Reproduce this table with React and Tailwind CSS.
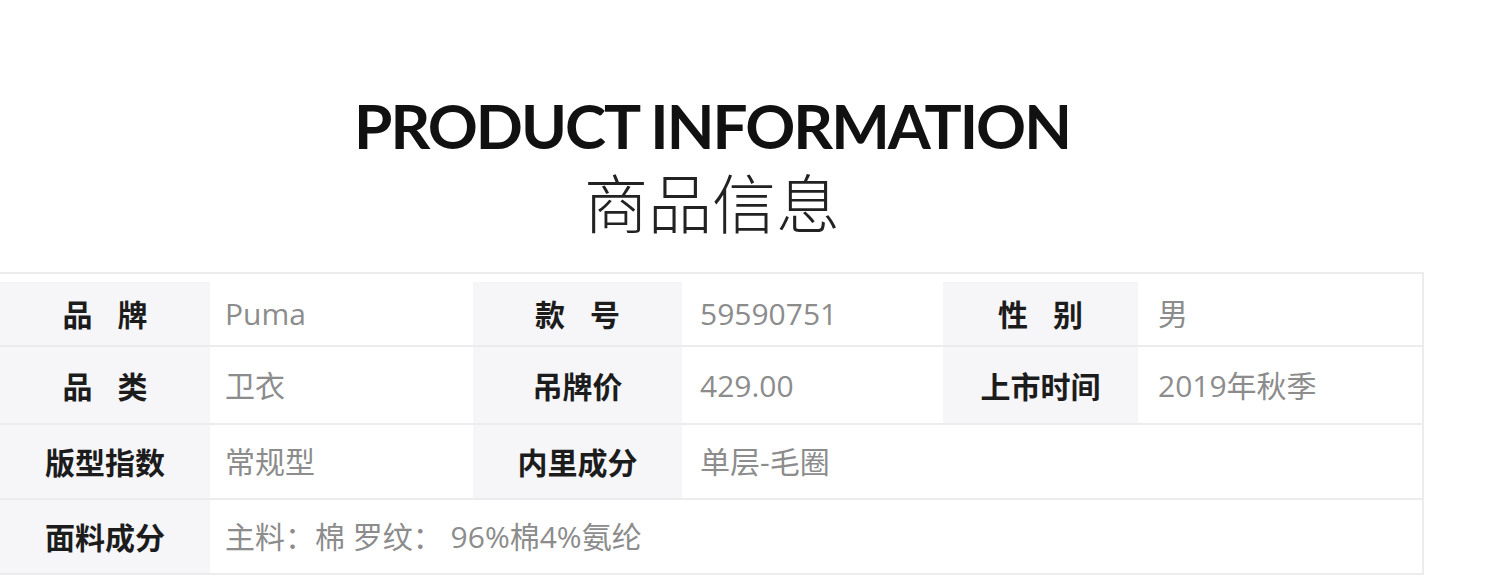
const rows = [
  {
    h: 'h-[73px] pt-[8px]',
    cells: [
      { label: ['品', '牌'], value: 'Puma' },
      { label: ['款', '号'], value: '59590751' },
      { label: ['性', '别'], value: '男' },
    ],
  },
  {
    h: 'h-[78px]',
    cells: [
      { label: ['品', '类'], value: '卫衣' },
      { label: ['吊牌价'], value: '429.00' },
      { label: ['上市时间'], value: '2019年秋季' },
    ],
  },
  {
    h: 'h-[75px]',
    cells: [
      { label: ['版型指数'], value: '常规型' },
      { label: ['内里成分'], value: '单层-毛圈', span: true },
    ],
  },
  {
    h: 'h-[75px]',
    cells: [{ label: ['面料成分'], value: '主料：棉 罗纹： 96%棉4%氨纶', span: true }],
  },
]

const labelW = ['w-[210px]', 'w-[209px]', 'w-[195px]']
const valueW = ['w-[263px]', 'w-[261px]', 'flex-1']
const valuePad = ['pl-[15px]', 'pl-[18px]', 'pl-[20px]']

const Label = ({ parts, w }) => (
  <div
    className={`${w} h-full flex items-center justify-center gap-[25px] bg-[#f6f6f9] text-[30px] font-semibold text-[#1c1c1c]`}
    style={{ fontFamily: '"Noto Sans CJK SC", sans-serif' }}
  >
    {parts.map((p) => (
      <span key={p}>{p}</span>
    ))}
  </div>
)

const Value = ({ text, w }) => (
  <div
    className={`${w} h-full flex items-center bg-white text-[30px] text-[#8c8c8c]`}
    style={{ fontFamily: '"Open Sans", "Noto Sans CJK SC", sans-serif' }}
  >
    {text}
  </div>
)

export default function App() {
  return (
    <div className="w-[1500px] h-[575px] bg-white overflow-hidden">
      <div className="w-[1424px] flex flex-col items-center pt-[94px]">
        <h1
          className="text-[62px] leading-[63px] font-bold tracking-[-2px] text-[#111]"
          style={{ fontFamily: 'Lato, sans-serif' }}
        >
          PRODUCT INFORMATION
        </h1>
        <h2
          className="mt-[11px] text-[64px] leading-[64px] font-light text-[#222]"
          style={{ fontFamily: '"Noto Sans CJK SC", sans-serif' }}
        >
          商品信息
        </h2>
      </div>

      <div className="mt-[40px] w-[1424px] border-t-2 border-r-2 border-[#ececef]">
        {rows.map((row, i) => (
          <div key={i} className={`${row.h} flex border-b-2 border-[#ececef]`}>
            {row.cells.map((c, j) => (
              <div key={j} className={`flex h-full ${c.span ? 'flex-1' : ''}`}>
                <Label parts={c.label} w={labelW[j]} />
                <Value text={c.value} w={`${c.span ? 'flex-1' : valueW[j]} ${valuePad[j]}`} />
              </div>
            ))}
          </div>
        ))}
      </div>
    </div>
  )
}
